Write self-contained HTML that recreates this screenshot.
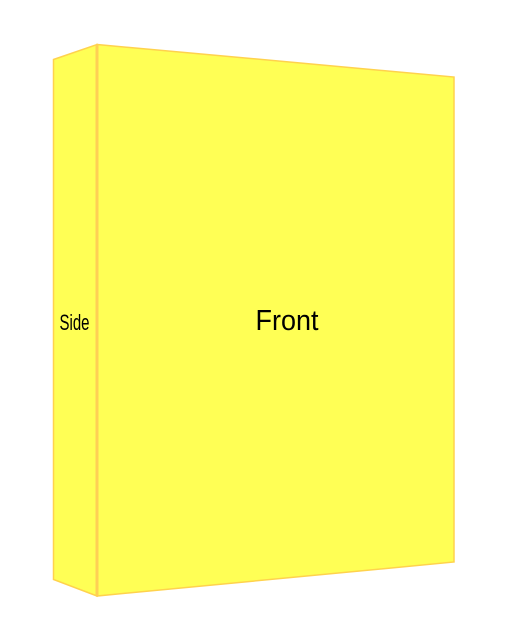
<!DOCTYPE html>
<html><head><style>html,body{margin:0;padding:0;background:#fff;width:516px;height:622px;overflow:hidden}</style></head>
<body>
<svg width="516" height="622" xmlns="http://www.w3.org/2000/svg">
<polygon points="53.5,59.5 97,44.5 97,596 53.5,579.5" fill="#ffff55" stroke="#ffd24d" stroke-width="1.5"/>
<polygon points="97,44.5 454,77 454,562 97,596" fill="#ffff55" stroke="#ffd24d" stroke-width="1.5"/>
<line x1="97" y1="44.5" x2="97" y2="596" stroke="#ffcf55" stroke-width="3"/>
<text x="287" y="330" font-family="Liberation Sans, sans-serif" font-size="29" text-anchor="middle" fill="#000" transform="translate(287 0) scale(0.93 1) translate(-287 0)">Front</text>
<text x="74.5" y="330" font-family="Liberation Sans, sans-serif" font-size="22" text-anchor="middle" fill="#000" transform="translate(74.5 0) scale(0.68 1) translate(-74.5 0)">Side</text>
</svg>
</body></html>
